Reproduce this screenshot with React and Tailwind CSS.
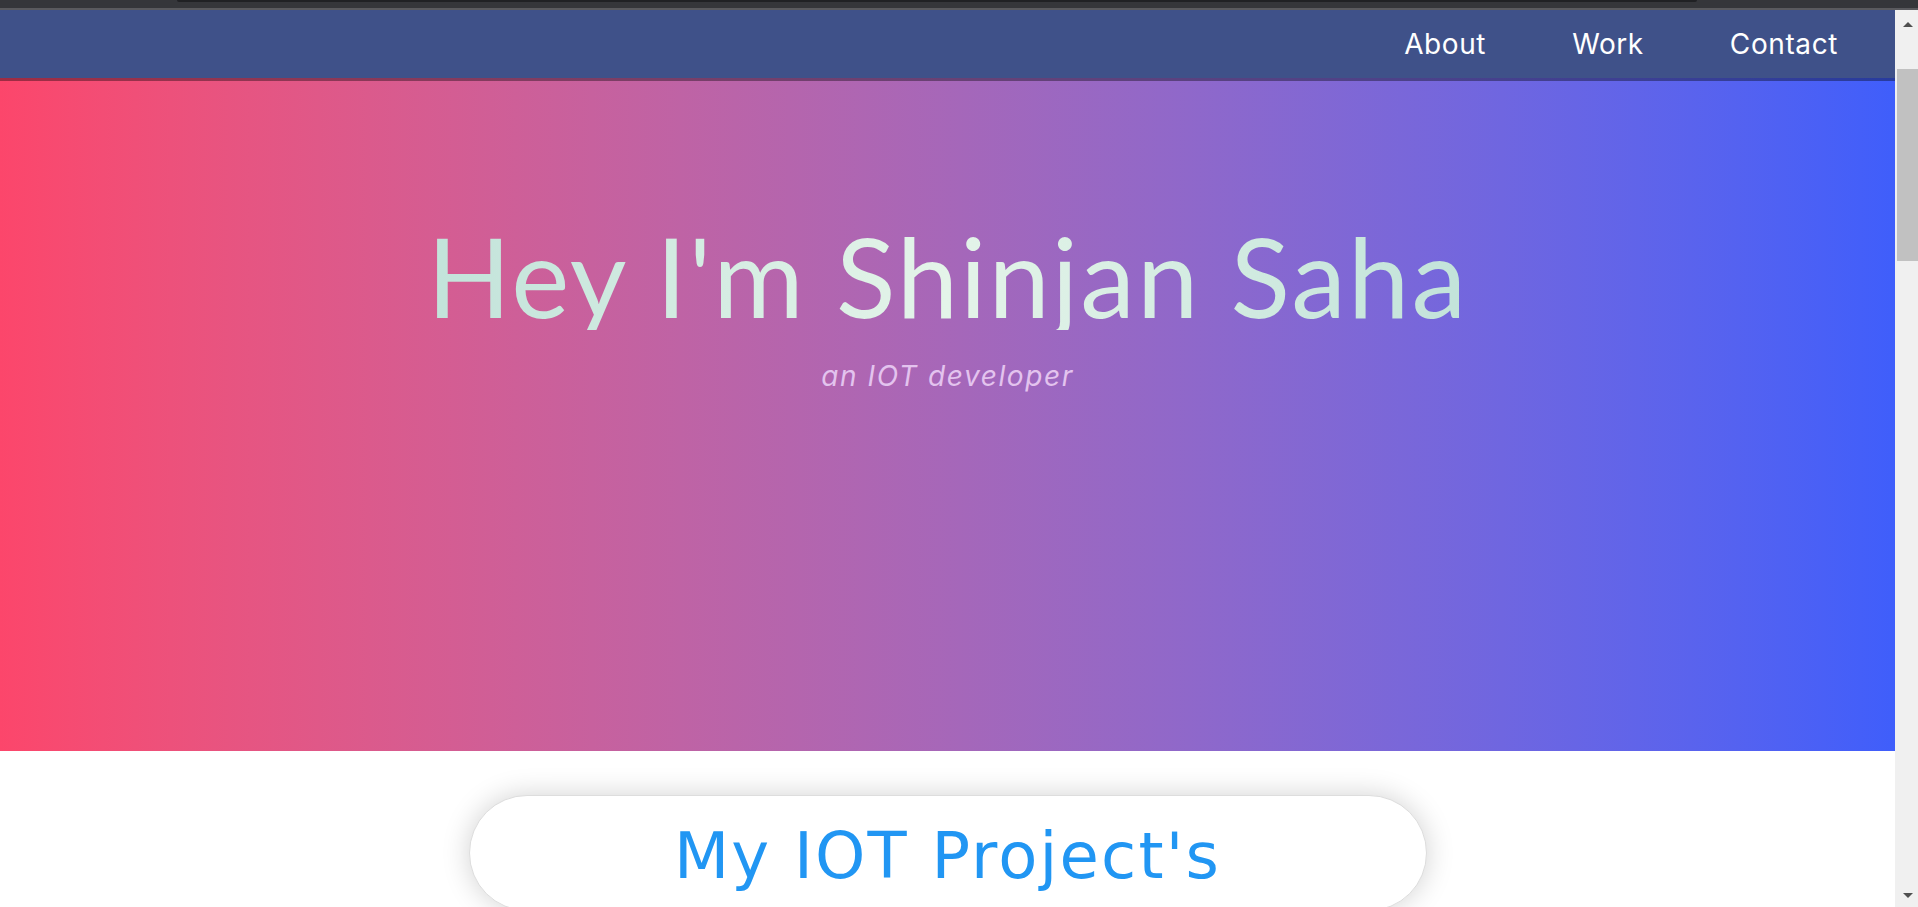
export default function App() {
  return (
    <div className="h-[907px] w-[1918px] overflow-hidden flex flex-col bg-white">
      {/* browser chrome strip */}
      <div className="h-[8px] shrink-0 bg-[#35363a] flex">
        <div className="ml-[177px] w-[1520px] h-[2px] bg-[#202124] rounded-b-[3px]"></div>
      </div>
      <div className="h-[2px] shrink-0 bg-[#5a5a5e]"></div>
      <div className="flex flex-1 min-h-0">
        <main className="flex-1 flex flex-col min-w-0">
          <nav className="relative z-10 h-[68px] shrink-0 bg-[#3f5189] shadow-[0_3px_0_rgba(0,0,0,0.37)] flex items-center justify-end pr-[57px] gap-[86px] text-white text-[28px] tracking-[0.6px] font-['Inter',sans-serif]">
            <a>About</a>
            <a>Work</a>
            <a>Contact</a>
          </nav>
          <section className="h-[673px] shrink-0 bg-gradient-to-r from-[#fc466b] to-[#3f5efb] flex flex-col items-center pt-[142px]">
            <h1 className="leading-none text-[110px] tracking-[2px] font-normal font-['Lato',sans-serif] bg-gradient-to-r from-[#c2e3da] via-[#e4f4e9] to-[#c2e3da] bg-clip-text text-transparent">
              Hey I'm Shinjan Saha
            </h1>
            <p className="mt-[25px] text-[28px] leading-[1.5] tracking-[1.6px] italic text-[#e3c3ee] font-['Inter',sans-serif]">
              an IOT developer
            </p>
          </section>
          <div className="mt-[44px] mx-auto w-[958px] h-[116px] shrink-0 rounded-[60px] border border-[#dddddd] bg-white shadow-[0_0_28px_rgba(0,0,0,0.18)] flex justify-center pt-[12px]">
            <h2 className="text-[64px] leading-[1.5] tracking-[2.2px] text-[#2196f3] font-['DejaVu_Sans',sans-serif]">
              My IOT Project's
            </h2>
          </div>
        </main>
        {/* scrollbar */}
        <div className="w-[23px] shrink-0 bg-[#f0f0f0] flex flex-col">
          <div className="h-[17px] flex items-end justify-center pl-[2px]">
            <div className="w-0 h-0 border-l-[5px] border-r-[5px] border-b-[5px] border-l-transparent border-r-transparent border-b-[#505050]"></div>
          </div>
          <div className="mt-[42px] ml-[2px] h-[192px] bg-[#c1c1c1]"></div>
          <div className="flex-1"></div>
          <div className="h-[14px] flex items-start justify-center pl-[2px]">
            <div className="w-0 h-0 border-l-[5px] border-r-[5px] border-t-[5px] border-l-transparent border-r-transparent border-t-[#505050]"></div>
          </div>
        </div>
      </div>
    </div>
  );
}
